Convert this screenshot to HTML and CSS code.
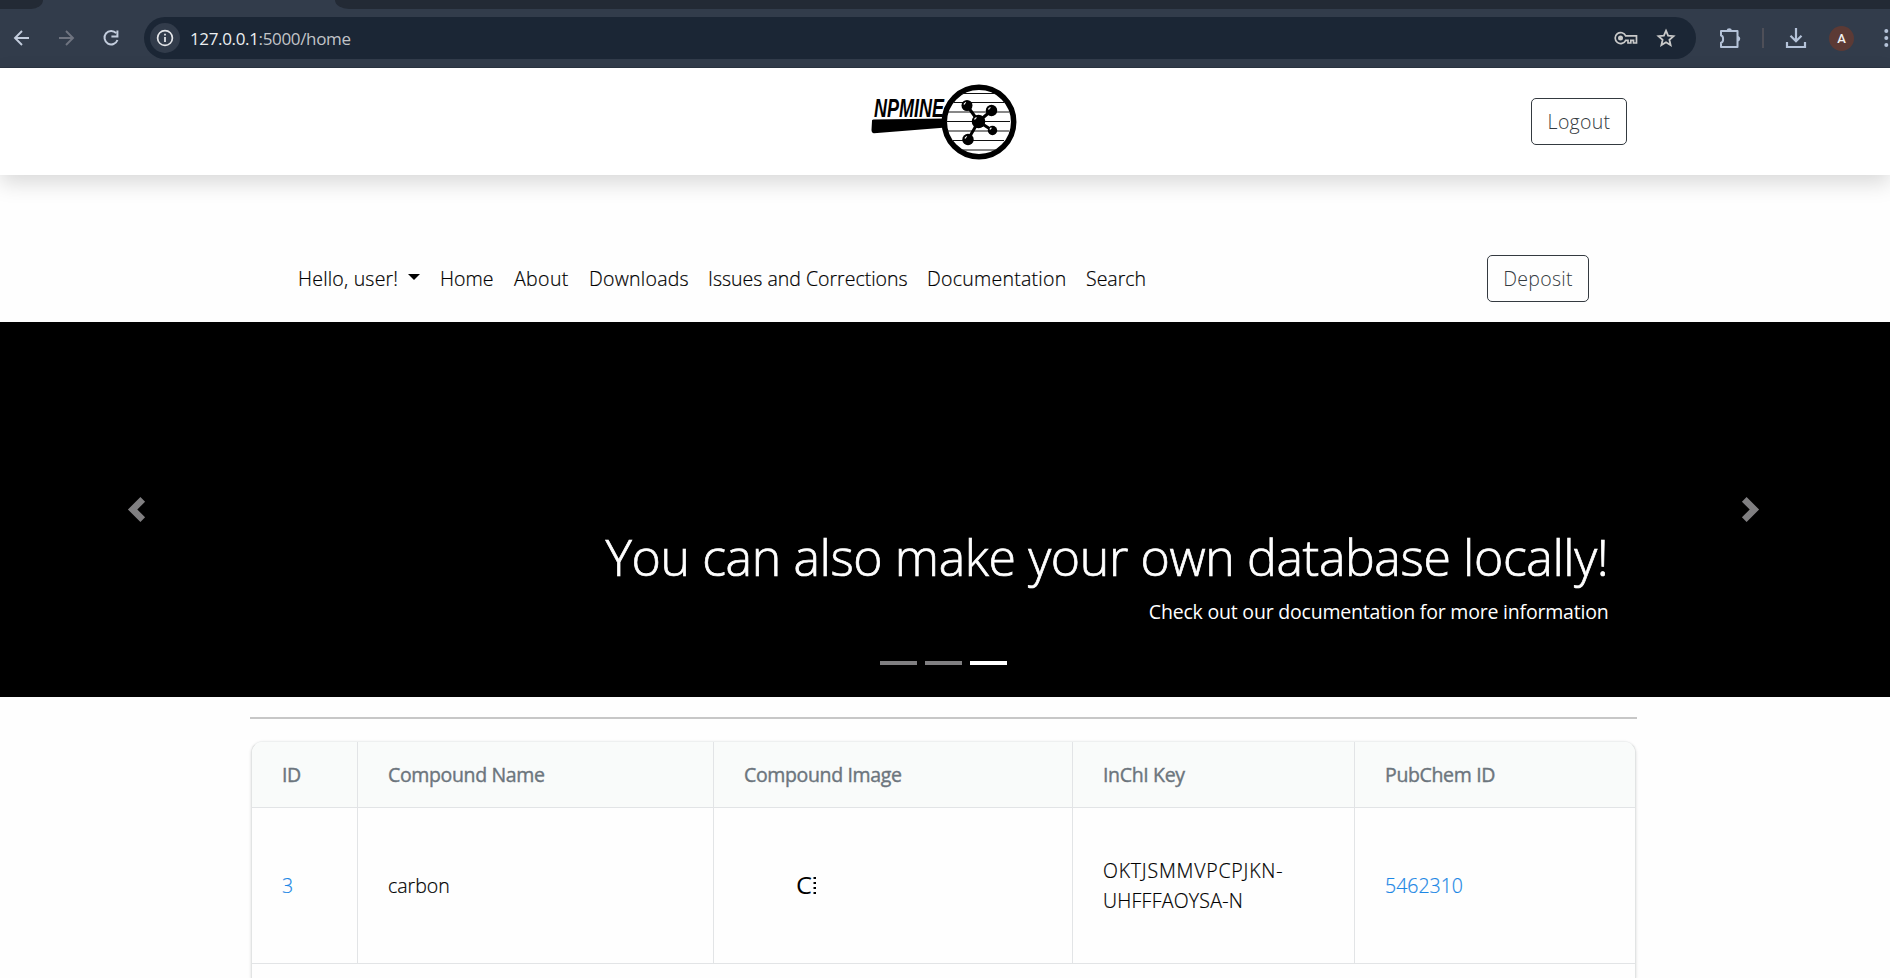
FILE: index.html
```html
<!DOCTYPE html>
<html lang="en">
<head>
<meta charset="utf-8">
<title>NPMine</title>
<link rel="stylesheet" href="styles.css">
</head>
<body>
<div class="browser">
  <div class="tabstrip"><div class="tab-left"></div><div class="tab-right"></div></div>
  <div class="toolbar">
    <svg class="ico back" width="20" height="20" viewBox="0 0 20 20"><path d="M17 10H3.5M10 3l-7 7 7 7" fill="none" stroke="#c3cddd" stroke-width="1.9"/></svg>
    <svg class="ico forward" width="20" height="20" viewBox="0 0 20 20"><path d="M3 10h13.500M10 3l7 7-7 7" fill="none" stroke="#6f7480" stroke-width="1.9"/></svg>
    <svg class="ico reload" width="20" height="20" viewBox="0 0 20 20"><path d="M15.200 5.200A6.700 6.700 0 1 0 16.500 12" fill="none" stroke="#c3cddd" stroke-width="2"/><path d="M16.400 2.500v6h-6" fill="none" stroke="#c3cddd" stroke-width="2"/></svg>
    <div class="address">
      <span class="site-info"><svg width="18" height="18" viewBox="0 0 18 18"><circle cx="9" cy="9" r="7.400" fill="none" stroke="#e3e5e8" stroke-width="1.700"/><path d="M9 8v5M9 4.800v1.800" stroke="#e3e5e8" stroke-width="1.800"/></svg></span>
      <span class="url"><b>127.0.0.1</b>:5000/home</span>
      <svg class="key" width="24" height="14" viewBox="0 0 24 14" fill="none" stroke="#c9c9c9" stroke-width="1.700"><path d="M11.700 4.800H22.500V12H19.500V9.300H16.800V12H14V9.300H11.700A5.500 5.500 0 1 1 11.700 4.800z"/><circle cx="6.500" cy="7" r="2.500" fill="#c9c9c9" stroke="none"/></svg>
      <svg class="star" width="20" height="20" viewBox="0 0 20 20"><path d="M10 2.700l2.100 5 5.400.5-4.100 3.600 1.200 5.300L10 14.300l-4.600 2.800 1.200-5.300-4.100-3.600 5.400-.5z" fill="none" stroke="#c9c9c9" stroke-width="1.800"/></svg>
    </div>
    <svg class="ext" width="22" height="22" viewBox="0 0 22 22"><path d="M2 4h16.500v16H2v-4.200c2.800-.3 2.800-7.100 0-7.400z" fill="none" stroke="#b5c3d9" stroke-width="2" stroke-linejoin="round"/><path d="M7.500 3.500a2.800 2.800 0 0 1 5.500 0zM19 9a2.800 2.800 0 0 1 0 5.500z" fill="#b5c3d9"/></svg>
    <span class="sep"></span>
    <svg class="dl" width="22" height="22" viewBox="0 0 22 22" fill="none" stroke="#b5c3d9" stroke-width="2.200"><path d="M11 1v13M5.500 8.700l5.500 5.500 5.500-5.500M2 15v5h18v-5"/></svg>
    <span class="avatar">A</span>
    <svg class="dots" width="5" height="20" viewBox="0 0 5 20" fill="#b5c3d9"><circle cx="2.300" cy="3" r="2"/><circle cx="2.300" cy="10" r="2"/><circle cx="2.300" cy="17" r="2"/></svg>
  </div>
</div>

<header class="masthead">
  <svg class="logo" width="148" height="78" viewBox="0 0 148 78">
    <path d="M2 38Q1.500 36.500 3.500 36.500L76 35.500V44.500L4 50.200Q1.500 50 1.500 47z"/>
    <text class="logo-text" x="4" y="33.500" textLength="70" lengthAdjust="spacingAndGlyphs">NPMINE</text>
    <circle cx="109" cy="39" r="34.700" fill="#fff" stroke="#000" stroke-width="5.500"/>
    <path d="M92 10.500h33M84 19.500h50M78 29h61M76 38.500h64M77 48h62M83 57.500h51M92 67h34" stroke="#111" stroke-width="1.100"/>
    <path d="M97 22.500L108.500 38.500 121.500 27.500M108.500 38.500l14 9M108.500 38.500L98 56.500" stroke="#000" stroke-width="3" fill="none"/>
    <circle cx="97" cy="22.500" r="5.500"/><circle cx="121.500" cy="27.500" r="5.700"/><circle cx="108.500" cy="38.500" r="6.800"/><circle cx="122.500" cy="47.500" r="4.700"/><circle cx="98" cy="56.500" r="5.700"/>
    <path d="M94 21.500a3 3 0 0 1 2-2M118.500 26.500a3 3 0 0 1 2-2M104.500 36.500a4 4 0 0 1 2-2M120 46.500a2 2 0 0 1 1.500-1.500M95 55.500a3 3 0 0 1 2-2" stroke="#fff" stroke-width="1.300" fill="none"/>
  </svg>
  <a class="btn logout"><span>Logout</span></a>
</header>

<nav class="nav">
  <a class="hello"><span>Hello, user!</span><i class="caret"></i></a>
  <a class="n-home"><span>Home</span></a>
  <a class="n-about"><span>About</span></a>
  <a class="n-downloads"><span>Downloads</span></a>
  <a class="n-issues"><span>Issues and Corrections</span></a>
  <a class="n-docs"><span>Documentation</span></a>
  <a class="n-search"><span>Search</span></a>
  <a class="btn deposit"><span>Deposit</span></a>
</nav>

<section class="carousel">
  <svg class="arrow" width="25" height="25" viewBox="0 0 8 8" fill="#807f81"><path d="M5.250 0l-4 4 4 4 1.500-1.500L4.250 4l2.500-2.500L5.250 0z"/></svg>
  <div class="caption">
    <h1>You can also make your own database locally!</h1>
    <p>Check out our documentation for more information</p>
    <div class="indicators"><i></i><i></i><i class="active"></i></div>
  </div>
  <svg class="arrow" width="25" height="25" viewBox="0 0 8 8" fill="#807f81"><path d="M2.750 0l-1.500 1.500L3.750 4l-2.500 2.500L2.750 8l4-4-4-4z"/></svg>
</section>

<main class="content">
  <div class="rule"></div>
  <div class="table">
    <div class="row head">
      <div>ID</div><div>Compound Name</div><div>Compound Image</div><div>InChI Key</div><div>PubChem ID</div>
    </div>
    <div class="row">
      <div><a class="link">3</a></div>
      <div>carbon</div>
      <div class="cell-image"><svg width="32" height="40" viewBox="0 0 32 40"><text class="atom" x="1" y="27.500" textLength="16" lengthAdjust="spacingAndGlyphs">C</text><path d="M18.500 11H21v2h-2.500zM18.500 16H21v2h-2.500zM18.500 21H21v2h-2.500zM18.500 26H21v2h-2.500z"/></svg></div>
      <div><span><span class="k1">OKTJSMMVPCPJKN-</span><br><span class="k2">UHFFFAOYSA-N</span></span></div>
      <div><a class="link">5462310</a></div>
    </div>
  </div>
</main>
</body>
</html>
```
FILE: styles.css
```css
* { box-sizing: border-box; }
body {
  margin: 0;
  height: 978px;
  overflow: hidden;
  background: #fefefe;
  color: #000;
  font: 300 19.5px/30px "Open Sans", sans-serif;
  -webkit-text-stroke: 0.2px currentColor;
}
svg { display: block; flex: none; }

.browser { height: 68px; background: #323c4b; border-bottom: 1px solid #2b3442; -webkit-text-stroke: 0; }
.tabstrip { height: 9px; display: flex; justify-content: space-between; }
.tab-left { width: 43px; background: #232a35; border-bottom-right-radius: 12px 9px; }
.tab-right { width: 1555px; background: #232a35; border-bottom-left-radius: 14px 9px; }
.toolbar { height: 58px; display: flex; align-items: center; overflow: hidden; }
.back { margin-left: 12px; }
.forward { margin-left: 24px; }
.reload { margin-left: 25px; }
.address {
  display: flex; align-items: center; flex: none;
  width: 1552px; height: 42px; margin-left: 23px;
  border-radius: 21px; background: #1b2635;
}
.site-info {
  display: grid; place-items: center; flex: none;
  width: 30px; height: 30px; margin-left: 6px;
  border-radius: 50%; background: #323c4b;
}
.url { margin-left: 10px; padding-top: 2px; font: 400 17px/24px "Open Sans", sans-serif; color: #c2c4c8; letter-spacing: -0.35px; }
.url b { font-weight: 400; color: #eceef0; }
.key { margin-left: auto; }
.star { margin: 0 20px 0 18px; }
.ext { margin-left: 23px; }
.sep { flex: none; width: 2px; height: 20px; margin-left: 21px; background: #4e4f58; }
.dl { margin-left: 21px; }
.avatar {
  flex: none; width: 25px; height: 25px; margin-left: 22px;
  border-radius: 50%; background: #5c3a35; color: #f2f2f2;
  font: 500 13px/25px Roboto, sans-serif; text-align: center;
}
.dots { margin-left: 30px; }

.masthead {
  display: flex; align-items: center;
  height: 107px; padding-left: 870px; background: #fff;
  box-shadow: 0 8px 20px rgba(0, 0, 0, .15);
}
.logo-text { font: italic 700 26px "Liberation Sans", sans-serif; }
.btn {
  display: flex; align-items: center; justify-content: center;
  height: 47px; border: 1px solid #343a40; border-radius: 5px;
  color: #343a40; letter-spacing: 0.3px;
  -webkit-text-stroke: 0;
}
.logout { width: 96px; margin-left: 513px; }
.deposit { width: 102px; margin-left: 331px; }

.nav {
  display: flex; align-items: center;
  height: 147px; padding: 69px 0 9px 298px;
}
.nav a { flex: none; white-space: nowrap; }
.hello { display: flex; align-items: center; width: 142px; letter-spacing: 0.2px; }
.caret { margin: -3px 0 0 10px; border: 6px solid transparent; border-top-color: #000; border-bottom: 0; }
.n-home { width: 74px; }
.n-about { width: 75px; letter-spacing: 0.4px; }
.n-downloads { width: 119px; letter-spacing: 0.25px; }
.n-issues { width: 219px; }
.n-docs { width: 159px; letter-spacing: 0.25px; }
.n-search { width: 70px; }

.carousel {
  display: flex; justify-content: space-between; align-items: flex-start;
  height: 375px; padding: 175px 127px 0 124px; background: #000;
}
.caption { width: 1326px; padding-top: 30px; color: #fff; white-space: nowrap; }
.caption h1 {
  margin: 0 -2px 0 0; text-align: right; font-weight: 300;
  font-size: 50px; line-height: 60px; letter-spacing: -0.38px;
  -webkit-text-stroke: 0.7px #fff;
}
.caption p { margin: 10px -2px 0 0; text-align: right; letter-spacing: -0.2px; font-weight: 400; -webkit-text-stroke: 0; }
.indicators { display: flex; justify-content: center; gap: 8px; margin-top: 34px; }
.indicators i { width: 37px; height: 4px; background: #807f81; }
.indicators .active { background: #fff; }

.content { padding: 20px 253px 0 250px; }
.rule { height: 2px; background: #c7c7c7; }
.table {
  height: 237px; margin: 22px 1px 0; overflow: hidden;
  border: 1px solid #e2e4e4; border-top-color: #eef0f0; border-bottom: 0;
  border-radius: 12px 12px 0 0; background: #fefefe;
  box-shadow: 0 1px 3px rgba(0, 0, 0, .15);
}
.row {
  display: grid; grid-template-columns: 106px 356px 359px 282px 1fr;
  height: 156px; border-bottom: 1px solid #e2e4e6;
}
.row > div { display: flex; align-items: center; padding: 0 0 0 30px; border-right: 1px solid #e2e4e6; }
.row > div:last-child { border-right: 0; }
.head {
  height: 66px; background: #f9fbfa; color: #6c757d;
  font-weight: 400; letter-spacing: -0.35px;
  -webkit-text-stroke: 0.4px currentColor;
}
.link { color: #1c87e5; }
.k1 { letter-spacing: 0.8px; }
.k2 { letter-spacing: 0.25px; }
.row .cell-image { padding-left: 81px; }
.atom { font: 400 24px "Open Sans", sans-serif; }
```
